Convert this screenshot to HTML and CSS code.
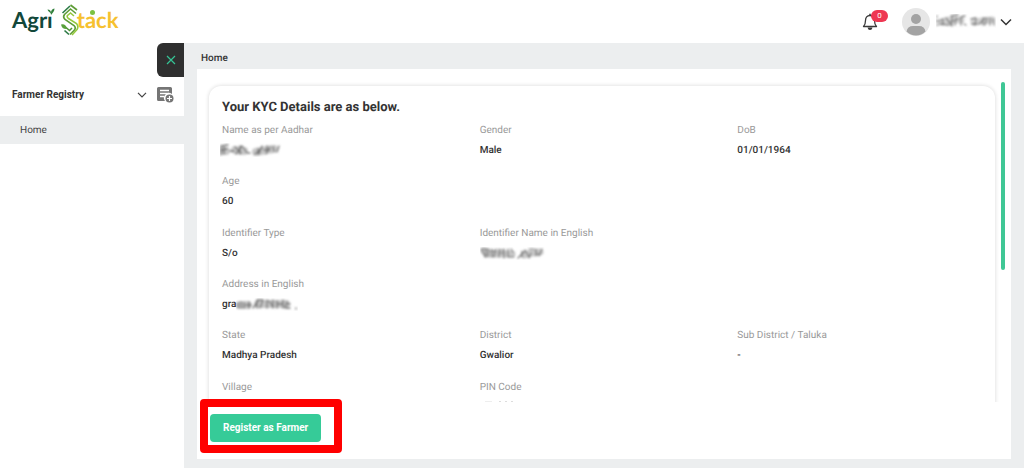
FILE: index.html
```html
<!DOCTYPE html>
<html lang="en">
<head>
<meta charset="utf-8">
<title>Agri Stack - Farmer Registry</title>
<meta name="viewport" content="width=device-width, initial-scale=1">
<link rel="stylesheet" href="styles.css">
</head>
<body>
<svg class="defs" aria-hidden="true">
  <filter id="soft" x="-10%" y="-20%" width="120%" height="140%"><feGaussianBlur stdDeviation="0.8"/></filter>
</svg>
<header class="topbar">
  <a class="logo" href="#" aria-label="Agri Stack">
    <span class="logo-agri">Agrı<svg class="sprout" viewBox="0 0 8 7" aria-hidden="true"><path d="M4 7C4 4 1.500 4.500 .5 1.500 3 1.500 4 3 4 5 4 2.500 5 .8 7.500 .5 7.500 3 6 4.500 4 7z" fill="#2f7f3a"/></svg></span>
    <svg class="logo-s" viewBox="0 0 18 32" aria-hidden="true">
      <g fill="none" stroke-width="1.600">
        <path d="M1.500 9 9 2" stroke="#2c7a45"/>
        <path d="M9.500 1 16 6" stroke="#5d9c35"/>
        <path d="M15 9.500 9.500 5 3.500 10.500Q1.500 13 4 15.500L13 21.500Q15.500 24 13 26.500L9 30.500" stroke="#5d9c35"/>
        <path d="M13 12 9.500 9 6.500 11.500Q5.500 13 7.500 14.500L15.500 19.500Q18 22.500 16 25.500L11 31" stroke="#94c83d"/>
        <path d="M3.500 26.500 8 30.500" stroke="#2c7a45"/>
        <path d="M5 23.500 8.500 26.500 11 24" stroke="#4f9437"/>
      </g>
      <path d="M0 20.500Q5 19.500 6 25 1 25.500 0 20.500z" fill="#58a03a"/>
    </svg>
    <span class="logo-stack">tack<i class="logo-dot"></i></span>
  </a>
  <div class="account">
    <button class="bell" type="button" aria-label="Notifications">
      <svg width="16" height="18" viewBox="0 0 16 18" aria-hidden="true"><path d="M1.500 13.500C3 12 3.500 10.500 3.500 7.500 3.500 4.500 5 2.500 8 2.500S12.500 4.500 12.500 7.500C12.500 10.500 13 12 14.500 13.500z" fill="none" stroke="#3a3a3a" stroke-width="1.300" stroke-linejoin="round"/><path d="M8 .8v1.700" stroke="#3a3a3a" stroke-width="1.500"/><path d="M5.500 14.500h5Q10 17 8 17t-2.500-2.500z" fill="#333"/></svg>
      <span class="badge">0</span>
    </button>
    <button class="user" type="button" aria-label="Account menu">
      <svg width="28" height="28" viewBox="0 0 28 28" aria-hidden="true"><circle cx="14" cy="14" r="14" fill="#e6e6e6"/><circle cx="14" cy="11" r="5" fill="#a3a3a3"/><path d="M4.500 23.500Q5.500 18 11 18h6q5.500 0 6.500 5.500-4 4-9.500 4t-9.500-4z" fill="#a3a3a3"/></svg>
      <svg class="user-name" width="60" height="16" viewBox="0 0 60 16" aria-hidden="true">
        <g filter="url(#soft)" fill="none" stroke-linecap="round">
          <path d="M5 8 13 6 25 6M38 8 46 7 56 6" stroke="#d2d2d2" stroke-width="7"/>
          <path d="M1 2v1M1 6v2M1 11h1M3 7l3-1M4 10l9 1M7 5v6M10 4l5 7M15 2l7-1M13 8l10-3M16 3v9M20 4l-1 7M25 3l4-1M25 4v7M28 10l2 1M35 5l5-1M36 10l5 0M40 5l-1 6M43 10l6-6M47 4v7M51 4l-2 7M54 4v7M57 5l1 6" stroke="#7d7d7d" stroke-width="1.300"/>
        </g>
      </svg>
      <svg width="12" height="8" viewBox="0 0 12 8" aria-hidden="true"><path d="M1 1.500 6 6.500 11 1.500" fill="none" stroke="#333" stroke-width="1.500"/></svg>
    </button>
  </div>
</header>
<div class="shell">
  <nav class="sidebar" aria-label="Main">
    <button class="toggle" type="button" aria-label="Close menu">
      <svg width="10" height="10" viewBox="0 0 10 10" aria-hidden="true"><path d="M1 1 9 9M9 1 1 9" stroke="#35c495" stroke-width="1.200"/></svg>
    </button>
    <button class="group" type="button">
      <span class="group-name">Farmer Registry</span>
      <svg width="10" height="6" viewBox="0 0 10 6" aria-hidden="true"><path d="M1 .8 5 4.800 9 .8" fill="none" stroke="#444" stroke-width="1.200"/></svg>
      <svg width="17" height="17" viewBox="0 0 17 17" aria-hidden="true"><path d="M1.500 0h12Q15 0 15 1.500V7A5 5 0 0 0 8 14H1.500Q0 14 0 12.500v-11Q0 0 1.500 0z" fill="#757575"/><path d="M3 3.500h9M3 6.500h9M3 9.500h4" stroke="#fff" stroke-width="1.300"/><circle cx="12.500" cy="11.500" r="4" fill="#757575"/><path d="M12.500 9v5M10 11.500h5" stroke="#fff" stroke-width="1.200"/></svg>
    </button>
    <a class="nav-link" href="#">Home</a>
  </nav>
  <main class="content">
    <h1 class="crumb">Home</h1>
    <section class="panel">
      <div class="scroller">
        <div class="card">
          <h2 class="card-title">Your KYC Details are as below.</h2>
          <dl class="details">
            <div class="field"><dt>Name as per Aadhar</dt><dd>
              <svg class="smudge" width="64" height="16" viewBox="0 0 64 16" aria-hidden="true"><g filter="url(#soft)" fill="none" stroke-linecap="round"><path d="M4 8h2M15 7l9 1M36 9l10-2 8-1" stroke="#c8c8c8" stroke-width="8"/><path d="M1 3v9M1 3l7-1M2 7l5-1M4 4v7M10 8h4M15 4l6 6M16 11l6-8M20 3v8M23 4l4 6M28 10h2M35 11l7-6M38 6v5M42 3l-3 8M44 7h6M47 3v6M50 4l-4 7M53 4l1 4M59 3l-2 6" stroke="#707070" stroke-width="1.300"/></g></svg>
            </dd></div>
            <div class="field"><dt>Gender</dt><dd>Male</dd></div>
            <div class="field"><dt>DoB</dt><dd>01/01/1964</dd></div>
            <div class="field field-first"><dt>Age</dt><dd>60</dd></div>
            <div class="field field-first"><dt>Identifier Type</dt><dd>S/o</dd></div>
            <div class="field"><dt>Identifier Name in English</dt><dd>
              <svg width="66" height="16" viewBox="0 0 66 16" aria-hidden="true"><g filter="url(#soft)" fill="none" stroke-linecap="round"><path d="M4 5 10 8 32 8M44 9 52 7 60 6" stroke="#c8c8c8" stroke-width="7"/><path d="M1 3h7M2 4l3 7M6 3v8M9 3l-1 8M11 5h5M12 3v8M16 3l-2 8M19 4h5M19 3v8M24 3v9M20 7h4M28 3v8M28 11h6M31 3l2 3M38 12l7-7M42 5v6M45 4l4 7M49 3l5 0M51 7l-2 5M56 3v7M62 3l-3 7M56 8h4" stroke="#767676" stroke-width="1.200"/></g></svg>
            </dd></div>
            <div class="field field-first"><dt>Address in English</dt><dd class="partial">gra
              <svg width="62" height="16" viewBox="0 0 62 16" aria-hidden="true"><g filter="url(#soft)" fill="none" stroke-linecap="round"><path d="M4 8h8M22 7h28" stroke="#c5c5c5" stroke-width="8"/><path d="M2 6v5M5 5v6M8 6v5M10 8h5M13 5v6M17 11l5-7M21 3v8M22 3h5M27 3l-3 8M31 3v8M33 4l4 6M37 3v8M41 4v7M42 7h4M47 3v8M51 5l-2 6M52 7h2M50 11h4M60 11v1" stroke="#737373" stroke-width="1.300"/></g></svg>
            </dd></div>
            <div class="field field-first"><dt>State</dt><dd>Madhya Pradesh</dd></div>
            <div class="field"><dt>District</dt><dd>Gwalior</dd></div>
            <div class="field"><dt>Sub District / Taluka</dt><dd>-</dd></div>
            <div class="field"><dt>Village</dt><dd></dd></div>
            <div class="field"><dt>PIN Code</dt><dd>
              <svg width="36" height="16" viewBox="0 0 36 16" aria-hidden="true"><path d="M5 2h7M19 1.500h2M25 1.500h2M31 1.500h2" stroke="#ddd" stroke-width="1"/></svg>
            </dd></div>
          </dl>
        </div>
        <div class="thumb"></div>
      </div>
      <footer class="actions">
        <div class="callout"><button class="register" type="button">Register as Farmer</button></div>
      </footer>
    </section>
  </main>
</div>
</body>
</html>
```
FILE: styles.css
```css
* { box-sizing: border-box; }
body {
  margin: 0;
  height: 100vh;
  display: flex;
  flex-direction: column;
  overflow: hidden;
  background: #fff;
  color: #333;
  font: 10px/16px Roboto, "Liberation Sans", sans-serif;
  text-rendering: geometricPrecision;
}
button { border: 0; padding: 0; background: none; color: inherit; font: inherit; cursor: pointer; }
a { color: inherit; text-decoration: none; }
svg { display: block; flex: none; }
.defs { position: absolute; width: 0; height: 0; }

.topbar {
  flex: none;
  height: 43px;
  display: flex;
  align-items: center;
  justify-content: space-between;
  padding: 0 12px;
}
.logo { display: flex; align-items: center; gap: 8px; font: 700 22px/32px Lato, sans-serif; margin-bottom: 4px; }
.logo-agri { position: relative; color: #12483a; }
.sprout { position: absolute; right: -2px; top: 4px; width: 8px; height: 7px; }
.logo-s { width: 18px; height: 32px; }
.logo-stack { position: relative; color: #f6c12f; margin-left: -10px; }
.logo-dot { position: absolute; left: 13px; top: 6px; width: 5px; height: 5px; border-radius: 50%; background: #7cc242; }
.account { display: flex; align-items: center; gap: 24px; }
.bell { position: relative; }
.badge {
  position: absolute;
  left: 9px;
  top: -3px;
  width: 17px;
  height: 12px;
  border-radius: 6px;
  background: #ee3752;
  color: #fff;
  font-size: 8px;
  line-height: 12px;
  text-align: center;
}
.user { display: flex; align-items: center; gap: 4px; }
.user-name { margin-left: 2px; }

.shell { flex: 1; min-height: 0; display: flex; }
.sidebar { flex: none; width: 184px; display: flex; flex-direction: column; }
.toggle {
  align-self: flex-end;
  width: 27px;
  height: 34px;
  display: grid;
  place-items: center;
  border-radius: 6px 0 0 6px;
  background: #2f2f2f;
}
.group {
  display: flex;
  align-items: center;
  gap: 10px;
  height: 39px;
  padding: 0 10px 3px 12px;
  text-align: left;
}
.group-name { flex: 1; font-weight: 700; }
.nav-link { height: 28px; padding-left: 20px; background: #eceeef; line-height: 29px; color: #444; }

.content {
  flex: 1;
  min-width: 0;
  display: flex;
  flex-direction: column;
  padding: 0 13px 9px;
  background: #eceeef;
}
.crumb { margin: 0; padding: 8px 4px 2px; font-size: 10px; line-height: 16px; font-weight: 500; }
.panel {
  flex: 1;
  min-height: 0;
  display: flex;
  flex-direction: column;
  padding-top: 12px;
  background: #fff;
}
.scroller {
  flex: 1;
  min-height: 0;
  display: flex;
  align-items: flex-start;
  overflow: hidden;
  padding: 0 6px 0 8px;
}
.card {
  flex: 1;
  margin: 5px 6px 0 4px;
  padding: 13px 0 0 13px;
  border-radius: 12px;
  box-shadow: 0 0 4px rgba(0, 0, 0, .16);
}
.card-title { margin: 0; font-size: 13px; line-height: 18px; font-weight: 700; }
.details {
  display: grid;
  grid-template-columns: repeat(3, 1fr);
  grid-auto-rows: 1fr;
  height: 308px;
  margin: 6px 0 0;
}
.field { display: flex; flex-direction: column; gap: 4px; min-width: 0; }
.field-first { grid-column-start: 1; }
.field dt { color: #999; }
.field dd { margin: 0; height: 16px; font-weight: 500; }
.smudge { margin-left: -2px; }
.partial { display: flex; }
.thumb { flex: none; width: 4px; height: 188px; margin-top: 1px; border-radius: 2px; background: #3fc795; }
.actions { display: flex; padding: 12px 13px 17px; }
.callout { position: relative; display: flex; }
.callout::after {
  content: "";
  position: absolute;
  inset: -15px -21px -11px -10px;
  border: 8px solid #f00;
  border-radius: 4px;
  pointer-events: none;
}
.register {
  height: 28px;
  padding: 0 13px;
  border-radius: 4px;
  background: #36cb98;
  color: #fff;
  font-weight: 700;
}
```
